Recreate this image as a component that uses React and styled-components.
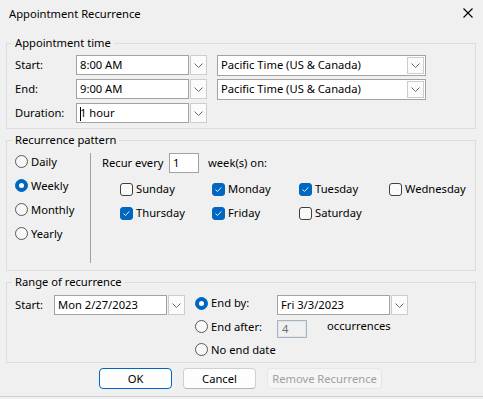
import React from 'react';
import styled, { createGlobalStyle } from 'styled-components';

const Global = createGlobalStyle`
  html, body { margin: 0; padding: 0; background: #f0f0f0; }
  body {
    font-family: "Noto Sans", "Segoe UI", sans-serif;
    font-size: 11.2px;
    color: #000;
  }
  #root { width: 483px; height: 399px; }
  * { box-sizing: border-box; }
`;

const Window = styled.div`
  width: 483px;
  height: 397px;
  background: #f0f0f0;
  border-bottom: 1px solid #cfcfcf;
  display: flex;
  flex-direction: column;
`;

const TitleBar = styled.div`
  height: 26px;
  display: flex;
  align-items: center;
  justify-content: space-between;
  padding: 0 10px 0 9px;
  font-size: 11.2px;
`;

const CloseButton = styled.div`
  width: 10px;
  height: 10px;
  display: flex;
`;

const Body = styled.div`
  padding-top: 9px;
  display: flex;
  flex-direction: column;
`;

const Group = styled.fieldset`
  margin: ${(p) => p.$mt || 0}px 7px 0 6px;
  padding: ${(p) => p.$pt}px 8px ${(p) => p.$pb}px 8px;
  border: 1px solid #dcdcdc;
  min-width: 0;
`;

const Legend = styled.legend`
  margin-left: -3px;
  padding: 0 3px;
  line-height: 16px;
`;

/* ---------- Appointment time ---------- */
const TimeGrid = styled.div`
  display: grid;
  grid-template-columns: 61px auto;
  grid-auto-rows: 20px;
  row-gap: 4px;
  align-items: center;
`;

const FieldLabel = styled.span`
  line-height: 16px;
  white-space: nowrap;
`;

const ControlRow = styled.div`
  display: flex;
  align-items: center;
  gap: 10px;
`;

const Combo = styled.div`
  display: flex;
  gap: 1px;
  height: 20px;
`;

const TextBox = styled.div`
  width: ${(p) => p.$w || 113}px;
  height: 20px;
  border: 1px solid #a2a2a2;
  background: #fff;
  padding-left: 3px;
  display: flex;
  align-items: center;
  line-height: 16px;
  white-space: nowrap;
  color: ${(p) => (p.$disabled ? '#6d6d6d' : '#000')};
  ${(p) =>
    p.$disabled &&
    `background: #f0f0f0; border-color: #a9b3bc; box-shadow: inset 0 0 0 1px #dfe4e8; padding-left: 4px;`}
`;

const DropButton = styled.div`
  width: 17px;
  height: ${(p) => p.$h || 20}px;
  border: 1px solid #cdcdcd;
  background: #fbfbfb;
  display: flex;
  align-items: center;
  justify-content: center;
  flex: none;
`;

const ZoneBox = styled.div`
  width: 209px;
  height: 21px;
  border: 1px solid #a2a2a2;
  background: #fff;
  display: flex;
  align-items: center;
  justify-content: space-between;
  padding: 0 1px 0 3px;
  line-height: 16px;
`;

const Caret = styled.span`
  display: inline-block;
  width: 1px;
  height: 14px;
  background: #000;
  margin-right: -1px;
  vertical-align: middle;
`;

/* ---------- Recurrence pattern ---------- */
const PatternLayout = styled.div`
  display: flex;
  height: 110px;
`;

const FreqList = styled.div`
  width: 75px;
  display: flex;
  flex-direction: column;
  gap: 7px;
`;

const Option = styled.label`
  display: flex;
  align-items: center;
  gap: 3px;
  height: 17px;
  line-height: 16px;
  white-space: nowrap;
  width: ${(p) => (p.$w ? `${p.$w}px` : 'auto')};
`;

const RadioCircle = styled.span`
  width: 13px;
  height: 13px;
  border-radius: 50%;
  flex: none;
  display: flex;
  align-items: center;
  justify-content: center;
  background: ${(p) => (p.$on ? '#0067c0' : '#f8f8f8')};
  border: 1px solid ${(p) => (p.$on ? '#0067c0' : '#585858')};
  &::after {
    content: '';
    display: ${(p) => (p.$on ? 'block' : 'none')};
    width: 5px;
    height: 5px;
    border-radius: 50%;
    background: #fff;
  }
`;

const WeekPanel = styled.div`
  flex: 1;
  border-left: 1px solid #a0a0a0;
  padding-left: 11px;
  display: flex;
  flex-direction: column;
  gap: 4px;
`;

const RecurRow = styled.div`
  display: flex;
  align-items: center;
  height: 20px;
  line-height: 16px;
`;

const RecurLabel = styled.span`
  width: 67px;
`;

const SmallBox = styled(TextBox)`
  width: 30px;
  margin-right: 9px;
`;

const DayGrid = styled.div`
  display: grid;
  grid-template-columns: 92px 87px 90px auto;
  grid-auto-rows: 24px;
  margin-left: 18px;
  align-items: center;
`;

const CheckBox = styled.span`
  width: 13px;
  height: 13px;
  border-radius: 3px;
  flex: none;
  display: flex;
  align-items: center;
  justify-content: center;
  background: ${(p) => (p.$on ? '#0067c0' : '#fafafa')};
  border: 1px solid ${(p) => (p.$on ? '#0067c0' : '#404040')};
`;

/* ---------- Range of recurrence ---------- */
const RangeLayout = styled.div`
  display: flex;
`;

const StartArea = styled.div`
  display: flex;
  align-items: center;
  height: 24px;
  padding-top: 4px;
  width: 180px;
`;

const StartLabel = styled.span`
  width: 39px;
  line-height: 16px;
`;

const EndOptions = styled.div`
  display: flex;
  flex-direction: column;
`;

const EndRow = styled.div`
  display: flex;
  align-items: center;
  height: ${(p) => p.$h}px;
`;

const EndControl = styled.div`
  align-self: flex-end;
  display: flex;
  align-items: center;
`;

const Occurrences = styled.span`
  margin-left: 11px;
  line-height: 16px;
  margin-top: -1px;
`;

/* ---------- Buttons ---------- */
const ButtonRow = styled.div`
  display: flex;
  gap: 11px;
  padding-left: 99px;
  margin-top: 5px;
`;

const Button = styled.button`
  width: ${(p) => p.$w}px;
  height: 21px;
  border-radius: 4px;
  font-family: inherit;
  font-size: 11.2px;
  line-height: 16px;
  padding: 0;
  background: ${(p) => (p.disabled ? '#f5f5f5' : '#fdfdfd')};
  color: ${(p) => (p.disabled ? '#a0a0a0' : '#000')};
  border: 1px solid
    ${(p) => (p.$primary ? '#0067c0' : p.disabled ? '#e6e6e6' : '#d0d0d0')};
  border-bottom-color: ${(p) =>
    p.$primary ? '#0067c0' : p.disabled ? '#e6e6e6' : '#b5b5b5'};
`;

const Chevron = () => (
  <svg width="9" height="5" viewBox="0 0 9 5">
    <polyline points="0.5,0.5 4.5,4.5 8.5,0.5" fill="none" stroke="#6a6a6a" strokeWidth="1" />
  </svg>
);

const Check = () => (
  <svg width="11" height="11" viewBox="0 0 11 11">
    <polyline points="2.5,5.6 4.5,7.5 8.3,3.4" fill="none" stroke="#e6f0fa" strokeWidth="1" />
  </svg>
);

const CloseIcon = () => (
  <svg width="10" height="10" viewBox="0 0 10 10">
    <path d="M0.5 0.5 L9.5 9.5 M9.5 0.5 L0.5 9.5" stroke="#000" strokeWidth="1.1" />
  </svg>
);

const DateCombo = ({ value, children }) => (
  <Combo>
    <TextBox>{children || value}</TextBox>
    <DropButton>
      <Chevron />
    </DropButton>
  </Combo>
);

const Zone = () => (
  <ZoneBox>
    <span>Pacific Time (US &amp; Canada)</span>
    <DropButton $h={17}>
      <Chevron />
    </DropButton>
  </ZoneBox>
);

const Radio = ({ on, label, w }) => (
  <Option $w={w}>
    <RadioCircle $on={on} />
    <span>{label}</span>
  </Option>
);

const Day = ({ on, label }) => (
  <Option>
    <CheckBox $on={on}>{on && <Check />}</CheckBox>
    <span>{label}</span>
  </Option>
);

export default function App() {
  return (
    <>
      <Global />
      <Window>
        <TitleBar>
          <span>Appointment Recurrence</span>
          <CloseButton>
            <CloseIcon />
          </CloseButton>
        </TitleBar>
        <Body>
          <Group $pt={4} $pb={5}>
            <Legend>Appointment time</Legend>
            <TimeGrid>
              <FieldLabel>Start:</FieldLabel>
              <ControlRow>
                <DateCombo value="8:00 AM" />
                <Zone />
              </ControlRow>
              <FieldLabel>End:</FieldLabel>
              <ControlRow>
                <DateCombo value="9:00 AM" />
                <Zone />
              </ControlRow>
              <FieldLabel>Duration:</FieldLabel>
              <ControlRow>
                <DateCombo>
                  <span>
                    <Caret />1 hour
                  </span>
                </DateCombo>
              </ControlRow>
            </TimeGrid>
          </Group>

          <Group $mt={3} $pt={5} $pb={7}>
            <Legend>Recurrence pattern</Legend>
            <PatternLayout>
              <FreqList>
                <Radio label="Daily" />
                <Radio label="Weekly" on />
                <Radio label="Monthly" />
                <Radio label="Yearly" />
              </FreqList>
              <WeekPanel>
                <RecurRow>
                  <RecurLabel>Recur every</RecurLabel>
                  <SmallBox>1</SmallBox>
                  <span>week(s) on:</span>
                </RecurRow>
                <DayGrid>
                  <Day label="Sunday" />
                  <Day label="Monday" on />
                  <Day label="Tuesday" on />
                  <Day label="Wednesday" />
                  <Day label="Thursday" on />
                  <Day label="Friday" on />
                  <Day label="Saturday" />
                </DayGrid>
              </WeekPanel>
            </PatternLayout>
          </Group>

          <Group $mt={3} $pt={1} $pb={1}>
            <Legend>Range of recurrence</Legend>
            <RangeLayout>
              <StartArea>
                <StartLabel>Start:</StartLabel>
                <DateCombo value="Mon 2/27/2023" />
              </StartArea>
              <EndOptions>
                <EndRow $h={24}>
                  <Radio label="End by:" on w={82} />
                  <EndControl>
                    <DateCombo value="Fri 3/3/2023" />
                  </EndControl>
                </EndRow>
                <EndRow $h={23}>
                  <Radio label="End after:" w={82} />
                  <EndControl>
                    <SmallBox as={TextBox} $w={30} $disabled style={{ height: 18 }}>
                      4
                    </SmallBox>
                  </EndControl>
                  <Occurrences>occurrences</Occurrences>
                </EndRow>
                <EndRow $h={23}>
                  <Radio label="No end date" />
                </EndRow>
              </EndOptions>
            </RangeLayout>
          </Group>

          <ButtonRow>
            <Button $w={73} $primary>OK</Button>
            <Button $w={73}>Cancel</Button>
            <Button $w={115} disabled>Remove Recurrence</Button>
          </ButtonRow>
        </Body>
      </Window>
    </>
  );
}
